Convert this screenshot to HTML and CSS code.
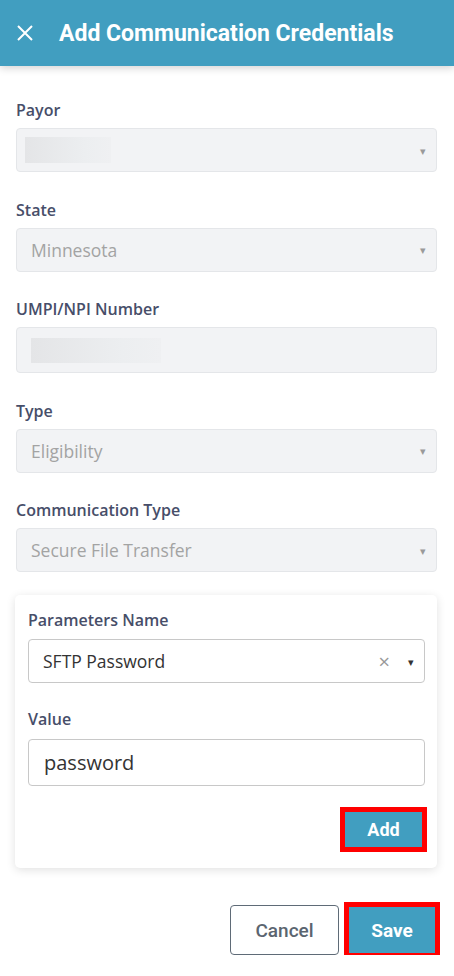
FILE: index.html
```html
<!DOCTYPE html>
<html lang="en">
<head>
  <meta charset="UTF-8" />
  <title>Add Communication Credentials</title>
  <link rel="stylesheet" href="styles.css">
</head>
<body>

  <header class="topbar">
    <button class="close-btn" aria-label="Close">
      <svg width="16" height="16" viewBox="0 0 16 16">
        <path d="M1 1 L15 15 M15 1 L1 15" stroke="#fff" stroke-width="2" fill="none"/>
      </svg>
    </button>
    <h1>Add Communication Credentials</h1>
  </header>

  <main class="form">
    <div class="field">
      <label>Payor</label>
      <div class="control disabled select">
        <span class="blur blur-payor"></span>
        <span class="caret">&#9662;</span>
      </div>
    </div>

    <div class="field">
      <label>State</label>
      <div class="control disabled select">
        <span class="value">Minnesota</span>
        <span class="caret">&#9662;</span>
      </div>
    </div>

    <div class="field">
      <label>UMPI/NPI Number</label>
      <div class="control disabled tall">
        <span class="blur blur-npi"></span>
      </div>
    </div>

    <div class="field">
      <label>Type</label>
      <div class="control disabled select">
        <span class="value">Eligibility</span>
        <span class="caret">&#9662;</span>
      </div>
    </div>

    <div class="field">
      <label>Communication Type</label>
      <div class="control disabled select">
        <span class="value">Secure File Transfer</span>
        <span class="caret">&#9662;</span>
      </div>
    </div>

    <!-- parametry -->
    <section class="param-card">
      <div class="field">
        <label>Parameters Name</label>
        <div class="control active select">
          <span class="value">SFTP Password</span>
          <span class="clear">&times;</span>
          <span class="caret dark">&#9662;</span>
        </div>
      </div>

      <div class="field">
        <label>Value</label>
        <div class="control active taller">
          <span class="value big">password</span>
        </div>
      </div>

      <div class="card-actions">
        <button class="btn primary marked">Add</button>
      </div>
    </section>

    <div class="actions">
      <button class="btn ghost">Cancel</button>
      <button class="btn primary marked save">Save</button>
    </div>
  </main>

</body>
</html>
```

FILE: styles.css
```css
/* Reset */
* {
  margin: 0;
  padding: 0;
  box-sizing: border-box;
}

body {
  background: #fff;
  font-family: "Open Sans", sans-serif;
  color: #333;
}

/* Pasek górny */
.topbar {
  height: 66px;
  background: #419ec0;
  display: flex;
  align-items: center;
  padding-left: 17px;
  box-shadow: 0 2px 8px rgba(0,0,0,0.18);
  position: relative;
}

.close-btn {
  background: none;
  border: none;
  width: 16px;
  height: 16px;
  display: flex;
  margin-right: 26px;
}

.topbar h1 {
  font-family: Roboto, sans-serif;
  font-weight: 700;
  font-size: 23px;
  color: #fff;
}

/* Formularz */
.form {
  padding: 34px 17px 0 16px;
}

.field {
  margin-bottom: 27.5px;
}

.field label {
  display: block;
  font-size: 16px;
  font-weight: 600;
  line-height: 20px;
  color: #474e69;
  margin-bottom: 8px;
}

.control {
  height: 44px;
  border-radius: 4px;
  display: flex;
  align-items: center;
  padding: 0 10px 0 14px;
  font-size: 17.5px;
}

.control.tall {
  height: 46px;
}

.control.taller {
  height: 47px;
}

.control.disabled {
  background: #f2f3f5;
  border: 1px solid #e4e6e9;
  color: #a3a3a3;
}

.control.active {
  background: #fff;
  border: 1px solid #c8c8c8;
  color: #333;
}

.control .value {
  flex: 1;
}

.control .value.big {
  font-size: 20px;
  padding-left: 1px;
}

.caret {
  font-size: 11px;
  color: #9a9a9a;
  margin-left: auto;
}

.caret.dark {
  color: #333;
  margin-left: 0;
}

.clear {
  color: #999;
  font-size: 20px;
  margin-right: 18px;
}

/* Zamazane wartości */
.blur {
  display: block;
  height: 26px;
  background: linear-gradient(90deg, #e4e5e7, #eceef0 70%, #eff0f2);
}
.blur-payor {
  width: 86px;
  margin-left: -6px;
}
.blur-npi {
  width: 130px;
  height: 25px;
}

/* Karta parametrów */
.param-card {
  margin: -4.5px 0 37px -1px;
  padding: 15px 12px 21px 13px;
  background: #fff;
  border-radius: 5px;
  box-shadow: 0 2px 10px rgba(0,0,0,0.12);
}

.param-card .field label {
  margin-bottom: 9px;
}

.param-card .field:first-child {
  margin-bottom: 26px;
}

.param-card .field:nth-child(2) label {
  margin-bottom: 10px;
}

.param-card .field:nth-child(2) {
  margin-bottom: 26px;
}

.card-actions {
  display: flex;
  justify-content: flex-end;
  padding-right: 3px;
}

/* Przyciski */
.btn {
  font-family: Roboto, sans-serif;
  font-size: 18px;
  font-weight: 700;
  border-radius: 4px;
  cursor: pointer;
}

.btn.primary {
  background: #419ec0;
  color: #fff;
  border: none;
  border-radius: 0;
  width: 77px;
  height: 35px;
}

.btn.marked {
  outline: 5px solid #f00;
}

.btn.save {
  width: 86px;
  height: 46px;
  font-size: 19px;
}

.btn.ghost {
  background: #fff;
  color: #5b6570;
  border: 1px solid #5f6b77;
  width: 109px;
  height: 50px;
  font-size: 19px;
  font-weight: 500;
}

.actions {
  display: flex;
  justify-content: flex-end;
  align-items: center;
  gap: 10px;
  padding-right: 2px;
}
```
